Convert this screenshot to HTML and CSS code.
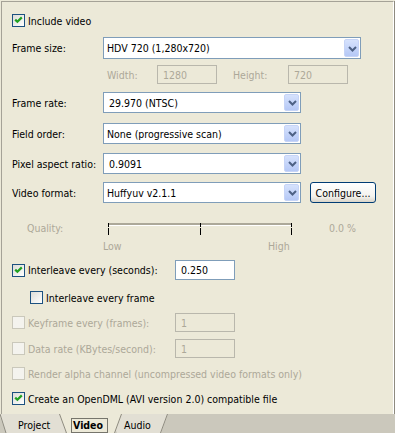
FILE: index.html
```html
<!DOCTYPE html>
<html>
  <head>
    <meta charset="UTF-8" />
    <title>Render Options - Video</title>
    <link rel="stylesheet" href="styles.css">
  </head>
  <body>
    <div class="panel">
      <div class="row r-include">
        <span class="box"><svg width="11" height="11"><polyline points="2.2,4.6 4.4,6.8 8.8,2.4" class="tick" /></svg></span>
        <span>Include video</span>
      </div>

      <div class="row r-size">
        <span class="lbl">Frame size:</span>
        <div class="combo wide">
          <span class="val">HDV 720 (1,280x720)</span>
          <span class="drop"><svg width="15" height="15"><polyline points="4,6 7.5,9.5 11,6" /></svg></span>
        </div>
      </div>

      <div class="row r-dims">
        <span class="lbl-dis dim-w">Width:</span>
        <span class="edit dis">1280</span>
        <span class="lbl-dis dim-h">Height:</span>
        <span class="edit dis">720</span>
      </div>

      <div class="row r-rate">
        <span class="lbl">Frame rate:</span>
        <div class="combo">
          <span class="val typed">29.970 (NTSC)</span>
          <span class="drop"><svg width="15" height="15"><polyline points="4,6 7.5,9.5 11,6" /></svg></span>
        </div>
      </div>

      <div class="row r-field">
        <span class="lbl">Field order:</span>
        <div class="combo">
          <span class="val">None (progressive scan)</span>
          <span class="drop"><svg width="15" height="15"><polyline points="4,6 7.5,9.5 11,6" /></svg></span>
        </div>
      </div>

      <div class="row r-par">
        <span class="lbl">Pixel aspect ratio:</span>
        <div class="combo">
          <span class="val typed">0.9091</span>
          <span class="drop"><svg width="15" height="15"><polyline points="4,6 7.5,9.5 11,6" /></svg></span>
        </div>
      </div>

      <div class="row r-format">
        <span class="lbl">Video format:</span>
        <div class="combo">
          <span class="val">Huffyuv v2.1.1</span>
          <span class="drop"><svg width="15" height="15"><polyline points="4,6 7.5,9.5 11,6" /></svg></span>
        </div>
        <button class="btn">Configure...</button>
      </div>

      <div class="row r-quality">
        <span class="lbl-dis quality">Quality:</span>
        <svg class="slider" width="187" height="14">
          <rect x="2" y="2" width="183" height="2" fill="#ACA899" />
          <rect x="2" y="4" width="183" height="1" fill="#FFFFFF" />
          <rect x="2" y="2" width="1" height="4" fill="#000" />
          <rect x="2" y="7" width="1" height="7" fill="#000" />
          <rect x="94" y="2" width="1" height="4" fill="#000" />
          <rect x="94" y="7" width="1" height="7" fill="#000" />
          <rect x="185" y="2" width="1" height="4" fill="#000" />
          <rect x="185" y="7" width="1" height="7" fill="#000" />
        </svg>
        <span class="lbl-dis pct">0.0 %</span>
      </div>

      <div class="row r-ends">
        <span class="lbl-dis low">Low</span>
        <span class="lbl-dis high">High</span>
      </div>

      <div class="row r-interleave">
        <span class="check">
          <span class="box"><svg width="11" height="11"><polyline points="2.2,4.6 4.4,6.8 8.8,2.4" class="tick" /></svg></span>
          <span>Interleave every (seconds):</span>
        </span>
        <span class="edit">0.250</span>
      </div>

      <div class="row r-frame">
        <span class="box"></span>
        <span>Interleave every frame</span>
      </div>

      <div class="row r-key">
        <span class="check">
          <span class="box off"></span>
          <span class="dim">Keyframe every (frames):</span>
        </span>
        <span class="edit dis">1</span>
      </div>

      <div class="row r-rate-kb">
        <span class="check">
          <span class="box off"></span>
          <span class="dim">Data rate (KBytes/second):</span>
        </span>
        <span class="edit dis">1</span>
      </div>

      <div class="row r-alpha">
        <span class="box off"></span>
        <span class="dim">Render alpha channel (uncompressed video formats only)</span>
      </div>

      <div class="row r-odml">
        <span class="box"><svg width="11" height="11"><polyline points="2.2,4.6 4.4,6.8 8.8,2.4" class="tick" /></svg></span>
        <span>Create an OpenDML (AVI version 2.0) compatible file</span>
      </div>
    </div>

    <svg class="tabs" width="395" height="19">
      <rect x="0" y="0" width="395" height="19" fill="#CBC8BC" />
      <polygon points="-1,0 72,0 65,19 6,19" fill="#E2DFD4" />
      <line x1="0" y1="0" x2="6" y2="19" stroke="#8E8B80" />
      <polygon points="110,0 168,0 161,19 117,19" fill="#E2DFD4" />
      <line x1="167.5" y1="0" x2="160.5" y2="19" stroke="#8E8B80" />
      <polygon points="59,0 122,0 115,19 66,19" fill="#ECE9D8" />
      <line x1="59.5" y1="0" x2="66.5" y2="19" stroke="#8E8B80" />
      <line x1="121.5" y1="0" x2="114.5" y2="19" stroke="#8E8B80" />
      <text x="18" y="15">Project</text>
      <rect x="71.5" y="4.5" width="36" height="14" fill="none" stroke="#000" stroke-dasharray="1,1" />
      <text x="73" y="15" class="sel">Video</text>
      <text x="124" y="15">Audio</text>
    </svg>
  </body>
</html>
```

FILE: styles.css
```css
body {
  margin: 0;
  width: 395px;
  height: 433px;
  overflow: hidden;
  background-color: #ECE9D8;
  color: black;
  font-family: "DejaVu Sans Condensed", "Liberation Sans", sans-serif;
  font-size: 10.5px;
}

.panel {
  margin: 1px 0 0 1px;
  width: 393px;
  height: 413px;
  box-sizing: border-box;
  padding-left: 10px;
  border-left: 1px solid #A5A297;
  border-top: 1px solid #A5A297;
  border-right: 1px solid #FFFFFF;
  box-shadow: 1px 0 0 #8E8B80;
}

.row {
  display: flex;
  align-items: center;
  white-space: nowrap;
}

/* vertical rhythm of the rows */
.r-include { margin-top: 12px; height: 13px; }
.r-size { margin-top: 10px; height: 22px; }
.r-dims { margin-top: 6px; height: 19px; }
.r-rate { margin-top: 8px; height: 21px; }
.r-field { margin-top: 10px; height: 21px; }
.r-par { margin-top: 9px; height: 21px; }
.r-format { margin-top: 8px; height: 21px; }
.r-quality { margin-top: 18px; height: 14px; }
.r-ends { margin-top: 5px; height: 12px; }
.r-interleave { margin-top: 8px; height: 20px; }
.r-frame { margin-top: 11px; height: 13px; padding-left: 18px; }
.r-key { margin-top: 9px; height: 19px; }
.r-rate-kb { margin-top: 7px; height: 19px; }
.r-alpha { margin-top: 9px; height: 13px; }
.r-odml { margin-top: 12px; height: 13px; }

.lbl {
  width: 91px;
}

.lbl-dis,
.dim {
  color: #ACA899;
}

/* checkboxes */
.box {
  width: 11px;
  height: 11px;
  margin-right: 3px;
  border: 1px solid #1C5180;
  background: linear-gradient(135deg, #DCDCD7, #FFFFFF);
  flex-shrink: 0;
}

.box svg {
  display: block;
}

.box.off {
  border-color: #CAC8BB;
  background: #F4F3EE;
}

.tick {
  fill: none;
  stroke: #21A121;
  stroke-width: 2.2;
}

.check {
  display: flex;
  align-items: center;
  width: 163px;
}

/* combo boxes */
.combo {
  display: flex;
  align-items: center;
  justify-content: space-between;
  width: 198px;
  height: 100%;
  box-sizing: border-box;
  border: 1px solid #7F9DB9;
  background: white;
  padding: 1px 1px 1px 3px;
}

.combo.wide {
  width: 258px;
}

.val.typed {
  padding-left: 2px;
}

.drop {
  width: 15px;
  height: 100%;
  box-sizing: border-box;
  display: flex;
  align-items: center;
  justify-content: center;
  border: 1px solid #C6D4F7;
  border-radius: 2px;
  background: linear-gradient(180deg, #D6E2FD, #B5C8F6);
}

.drop svg {
  display: block;
}

.drop polyline {
  fill: none;
  stroke: #4D6185;
  stroke-width: 2;
}

.btn {
  margin-left: 9px;
  width: 66px;
  height: 21px;
  padding: 0;
  font: inherit;
  color: black;
  border: 1px solid #003C74;
  border-radius: 3px;
  background: linear-gradient(180deg, #FFFFFF, #F4F3EE 70%, #D9D4C9);
}

/* edit fields */
.edit {
  width: 60px;
  height: 100%;
  box-sizing: border-box;
  padding-left: 5px;
  display: flex;
  align-items: center;
  border: 1px solid #7F9DB9;
  background: white;
}

.edit.dis {
  color: #ACA899;
  background: #ECE9D8;
  border-color: #B9B7AC;
}

.dim-w {
  margin-left: 95px;
  width: 50px;
}

.dim-h {
  margin-left: 16px;
  width: 55px;
}

/* quality slider */
.quality {
  margin-left: 15px;
  width: 79px;
}

.slider {
  display: block;
  align-self: flex-start;
}

.pct {
  margin-left: 36px;
}

.low {
  margin-left: 91px;
  width: 165px;
}

/* tab strip */
.tabs {
  display: block;
}

.tabs text {
  font-family: "DejaVu Sans Condensed", "Liberation Sans", sans-serif;
  font-size: 10.5px;
  fill: black;
}

.tabs text.sel {
  font-weight: bold;
}
```
